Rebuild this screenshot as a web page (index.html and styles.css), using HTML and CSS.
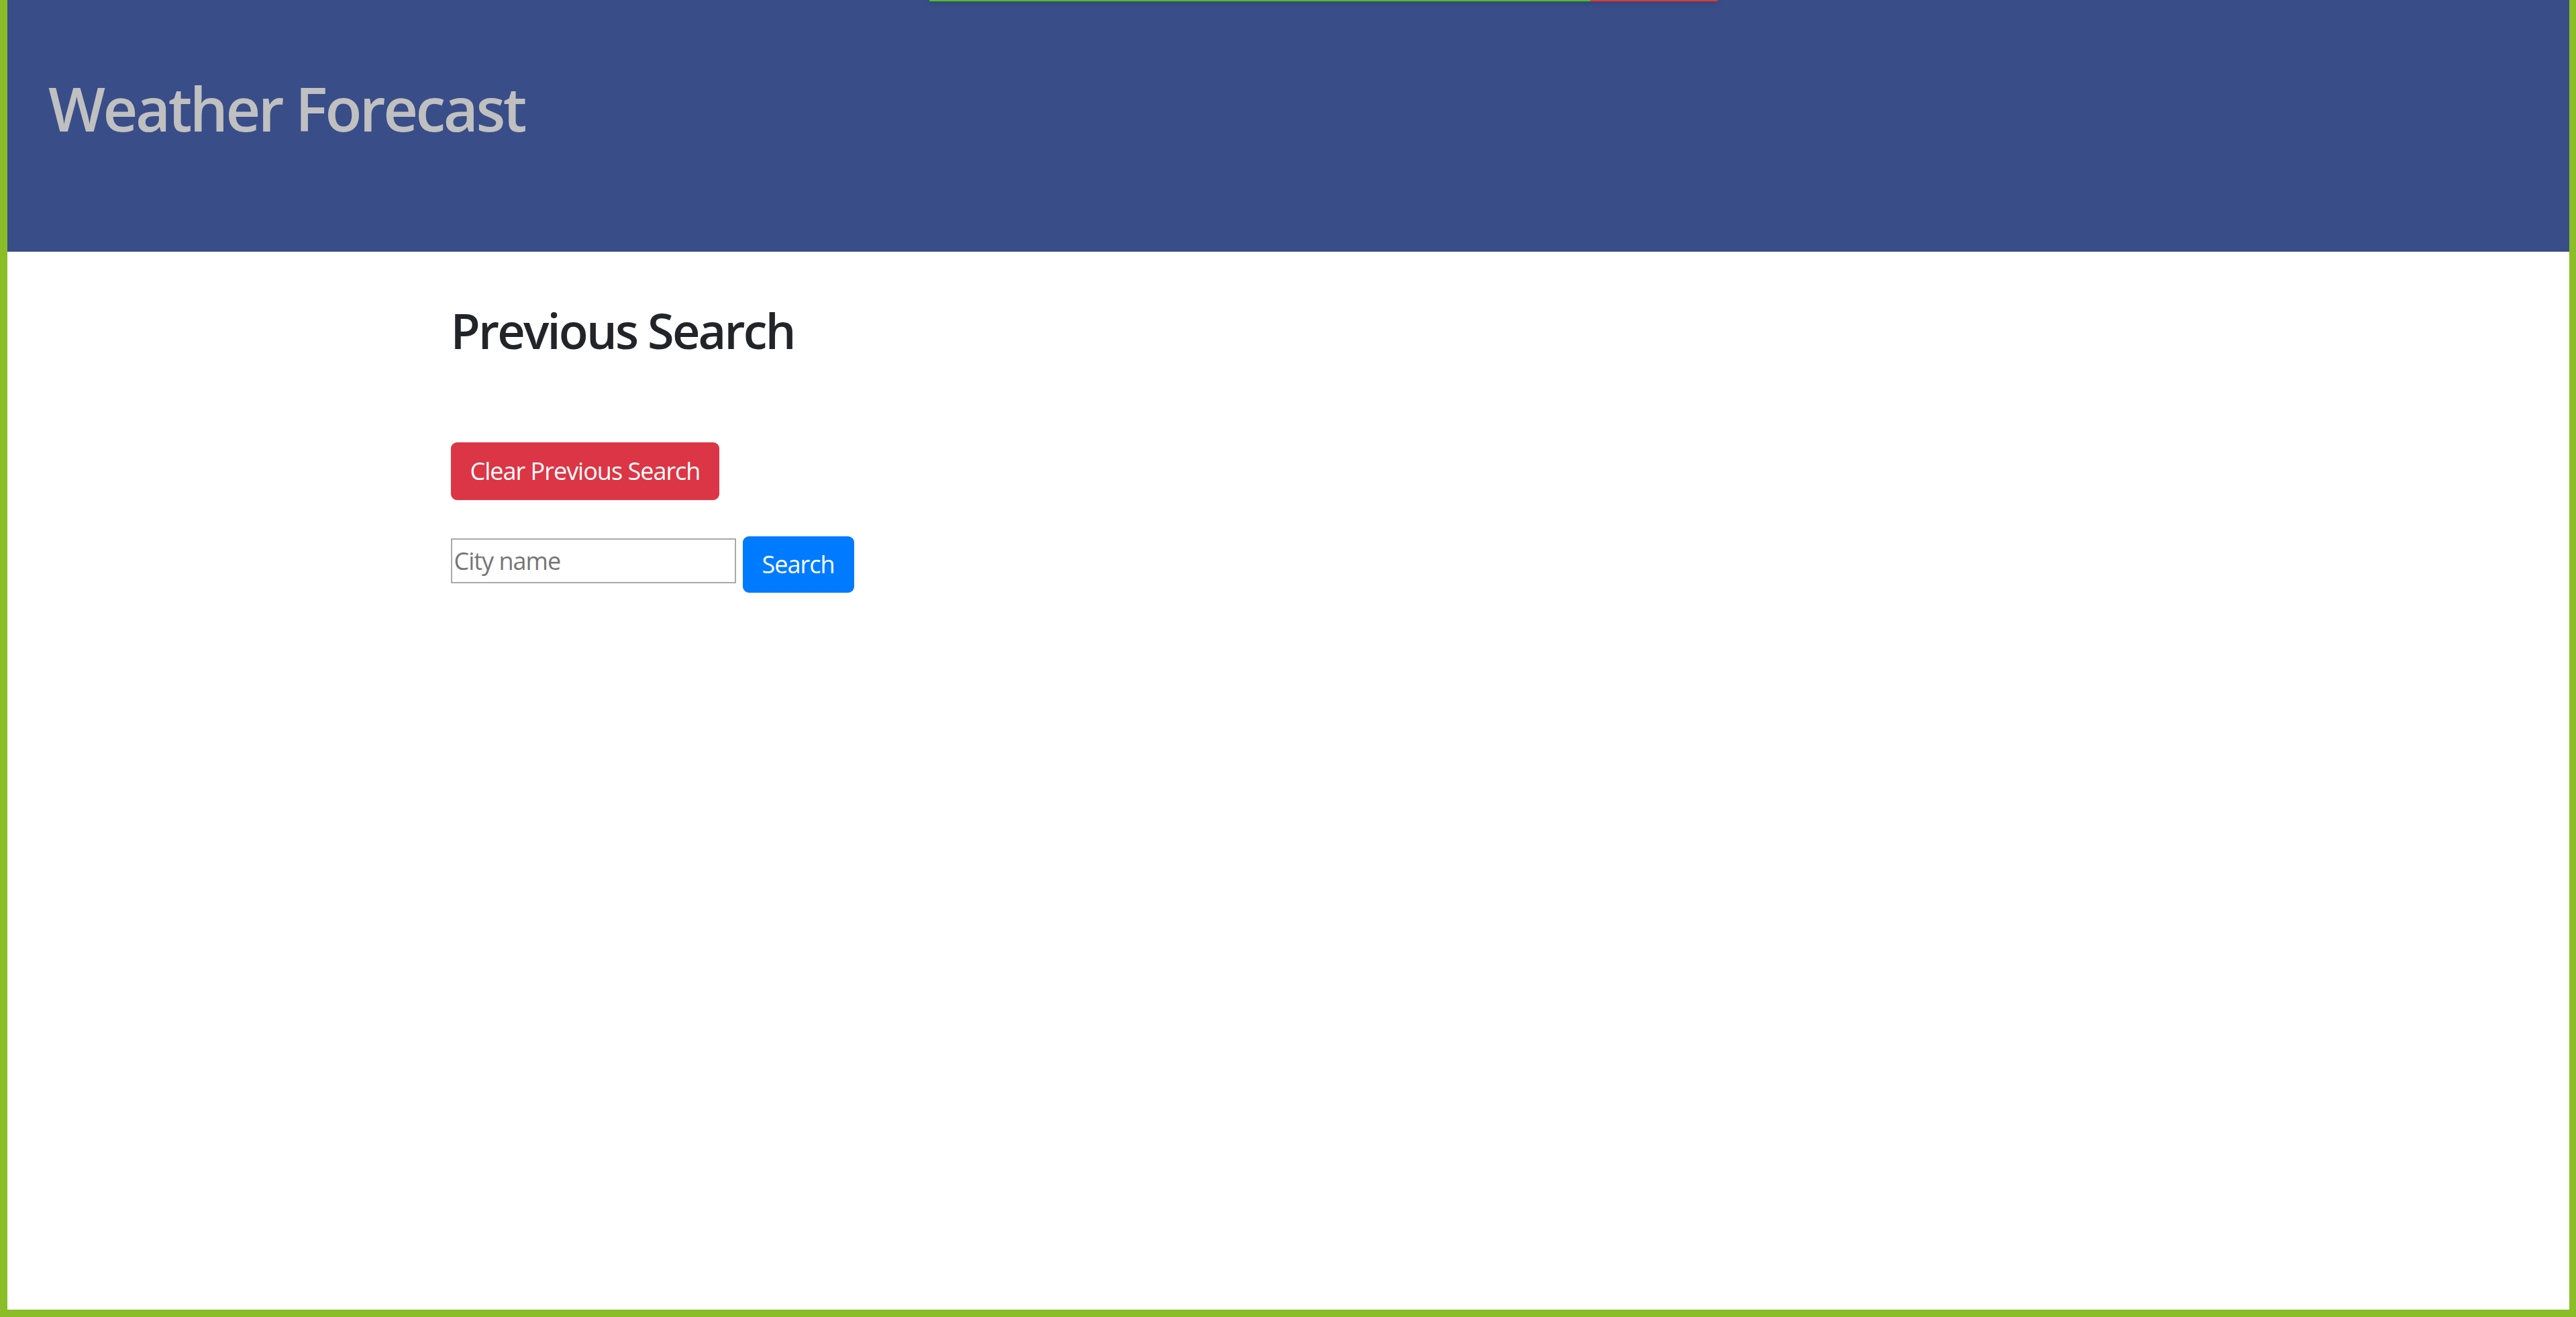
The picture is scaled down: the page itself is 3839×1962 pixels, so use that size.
FILE: index.html
```html
<!DOCTYPE html>
<html lang="en">
<head>
<meta charset="utf-8">
<title>Weather Forecast</title>
<link rel="stylesheet" href="styles.css">
</head>
<body>
<div class="frame">
  <div class="loadbar"><div class="load-ok"></div><div class="load-err"></div></div>
  <header class="topbar">
    <h1 class="brand">Weather Forecast</h1>
  </header>
  <main class="container">
    <h2 class="section-title">Previous Search</h2>
    <div class="clear-row">
      <button class="btn btn-danger" type="button">Clear Previous Search</button>
    </div>
    <form class="search-form">
      <input class="city-input" type="text" placeholder="City name">
      <button class="btn btn-primary" type="button">Search</button>
    </form>
  </main>
</div>
</body>
</html>
```

FILE: styles.css
```css
* { box-sizing: border-box; }
html, body { margin: 0; padding: 0; background: #ffffff; }
body {
  font-family: "Open Sans", "Noto Sans", "Liberation Sans", sans-serif;
  color: #212529;
}
.frame {
  position: relative;
  height: 1962px;
  border-left: 11px solid #8abd27;
  border-right: 10px solid #8abd27;
  border-bottom: 11px solid #8abd27;
  background: #ffffff;
  overflow: hidden;
}
.loadbar {
  position: absolute;
  top: 0;
  left: 1374px;
  width: 1175px;
  height: 2px;
  display: flex;
  box-shadow: 0 2px 8px rgba(0, 0, 0, 0.35);
  z-index: 5;
}
.load-ok { flex: 0 0 985px; background: #4cc21a; }
.load-err { flex: 1 1 auto; background: #e2372f; }
.topbar {
  height: 375px;
  background: #394d89;
  padding: 107px 0 0 61px;
}
.brand {
  margin: 0;
  font-size: 90px;
  line-height: 1.2;
  font-weight: 600;
  letter-spacing: -3.5px;
  color: #c0c0c0;
}
.container {
  width: 2565px;
  margin: 0 auto;
  padding: 0 34px;
}
.section-title {
  margin: 74px 0 0 0;
  font-size: 72px;
  line-height: 1.2;
  font-weight: 600;
  letter-spacing: -2.8px;
  color: #212529;
}
.clear-row { margin-top: 124px; }
.btn {
  display: inline-block;
  font-family: inherit;
  font-size: 36px;
  line-height: 54px;
  letter-spacing: -1px;
  padding: 14px 27px;
  border: 2px solid transparent;
  border-radius: 9px;
  color: #ffffff;
  cursor: pointer;
}
.btn-danger { background: #dc3545; border-color: #dc3545; }
.btn-primary { background: #007bff; border-color: #007bff; height: 84px; padding-top: 13px; padding-bottom: 13px; }
.search-form {
  margin: 54px 0 0 0;
  display: flex;
  align-items: flex-start;
  gap: 10px;
}
.city-input {
  margin-top: 3px;
  width: 425px;
  height: 67px;
  border: 2px solid #a9a9a9;
  padding: 0 3px;
  font-family: inherit;
  font-size: 36px;
  letter-spacing: -1px;
  color: #495057;
  background: #ffffff;
  outline: none;
}
.city-input::placeholder { color: #757575; opacity: 1; }
```
